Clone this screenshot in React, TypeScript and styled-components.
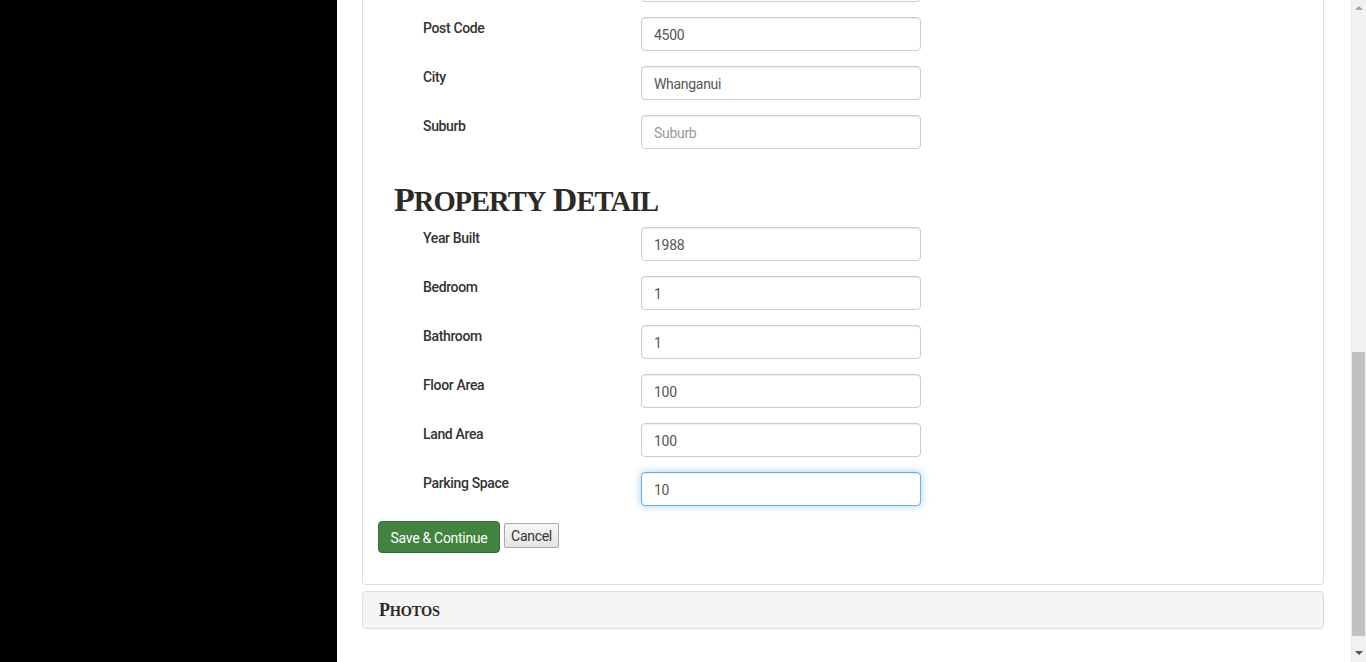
import React from "react";
import styled, { createGlobalStyle } from "styled-components";

const Global = createGlobalStyle`
  html, body { margin: 0; padding: 0; height: 662px; overflow: hidden; background: #fff; }
  body { font-family: Roboto, "Liberation Sans", sans-serif; }
  * { box-sizing: border-box; }
`;

const Shell = styled.div`
  display: flex;
  height: 662px;
  overflow: hidden;
`;

const Sidebar = styled.aside`
  width: 337px;
  flex: 0 0 337px;
  background: #000;
`;

const Main = styled.main`
  flex: 1;
  min-width: 0;
  background: #fff;
  padding: 0 27px 0 25px;
  overflow: hidden;
`;

const Panel = styled.section`
  margin-top: -60px;
  border: 1px solid #ddd;
  border-top: none;
  border-radius: 0 0 4px 4px;
  padding: 0 15px 31px 15px;
`;

const Fields = styled.div<{ $top?: number }>`
  display: flex;
  flex-direction: column;
  gap: 15px;
  padding-left: 45px;
  padding-top: ${(p) => p.$top ?? 0}px;
`;

const Row = styled.div`
  display: grid;
  grid-template-columns: 218px 280px;
  align-items: start;
  height: 34px;
`;

const Label = styled.label`
  font-size: 14px;
  font-weight: 500;
  color: #333;
  letter-spacing: -0.35px;
  padding-top: 1px;
  line-height: 20px;
`;

const Input = styled.input<{ $focus?: boolean }>`
  width: 280px;
  height: 34px;
  padding: 8px 12px 6px;
  font-family: Roboto, "Liberation Sans", sans-serif;
  font-size: 14px;
  letter-spacing: -0.3px;
  color: #555;
  background: #fff;
  border: 1px solid ${(p) => (p.$focus ? "#66afe9" : "#ccc")};
  border-radius: 4px;
  box-shadow: ${(p) =>
    p.$focus
      ? "inset 0 1px 1px rgba(0,0,0,.075), 0 0 8px rgba(102,175,233,.6)"
      : "inset 0 1px 1px rgba(0,0,0,.075)"};
  outline: none;
  &::placeholder { color: #999; }
`;

const Heading = styled.h2`
  margin: 0;
  padding: 34px 0 8px 16px;
  font-family: "Liberation Serif", "Times New Roman", serif;
  font-weight: 700;
  font-size: 34px;
  line-height: 34px;
  letter-spacing: -1px;
  color: #2d2a26;
`;

const Small = styled.span<{ $scale?: number }>`
  font-size: ${(p) => p.$scale ?? 0.84}em;
`;

const Actions = styled.div`
  display: flex;
  align-items: center;
  gap: 4px;
  margin-top: 15px;
`;

const PrimaryButton = styled.button`
  height: 32px;
  width: 122px;
  padding: 1px 0 0;
  white-space: nowrap;
  font-family: Roboto, "Liberation Sans", sans-serif;
  font-size: 14px;
  letter-spacing: -0.3px;
  color: #fff;
  background: #41833f;
  border: 1px solid #366f35;
  border-radius: 4px;
`;

const PlainButton = styled.button`
  height: 25px;
  width: 55px;
  padding: 0;
  font-family: Roboto, "Liberation Sans", sans-serif;
  font-size: 14px;
  letter-spacing: -0.3px;
  color: #333;
  background: linear-gradient(#f6f6f6, #e4e4e4);
  border: 1px solid #a9a9a9;
  border-radius: 2px;
  margin-top: -3px;
`;

const CollapsedPanel = styled.div`
  margin-top: 6px;
  height: 38px;
  display: flex;
  align-items: center;
  padding: 0 16px;
  background: #f5f5f5;
  border: 1px solid #ddd;
  border-radius: 4px;
`;

const PanelTitle = styled.h3`
  margin: 0;
  font-family: "Liberation Serif", "Times New Roman", serif;
  font-weight: 700;
  font-size: 18px;
  color: #2d2a26;
  letter-spacing: -0.2px;
`;

const Scrollbar = styled.div`
  width: 15px;
  flex: 0 0 15px;
  background: #f1f1f1;
  border-left: 1px solid #e8e8e8;
  padding: 352px 0 0 0;
  position: relative;
`;

const Thumb = styled.div`
  width: 13px;
  height: 284px;
  background: #c1c1c1;
`;

const Arrow = styled.div<{ $up?: boolean }>`
  position: absolute;
  left: 3px;
  ${(p) => (p.$up ? "top: 6px;" : "bottom: 7px;")}
  width: 0;
  height: 0;
  border-left: 4px solid transparent;
  border-right: 4px solid transparent;
  ${(p) => (p.$up ? "border-bottom: 4px solid #a3a3a3;" : "border-top: 4px solid #505050;")}
`;

const address = [
  { label: "", value: "" },
  { label: "Post Code", value: "4500" },
  { label: "City", value: "Whanganui" },
  { label: "Suburb", value: "", placeholder: "Suburb" },
];

const property = [
  { label: "Year Built", value: "1988" },
  { label: "Bedroom", value: "1" },
  { label: "Bathroom", value: "1" },
  { label: "Floor Area", value: "100" },
  { label: "Land Area", value: "100" },
  { label: "Parking Space", value: "10", focus: true },
];

export default function App() {
  return (
    <>
      <Global />
      <Shell>
        <Sidebar />
        <Main>
          <Panel>
            <Fields $top={28}>
              {address.map((f, i) => (
                <Row key={i}>
                  <Label>{f.label}</Label>
                  <Input defaultValue={f.value} placeholder={f.placeholder} />
                </Row>
              ))}
            </Fields>
            <Heading>
              P<Small>ROPERTY</Small> D<Small>ETAIL</Small>
            </Heading>
            <Fields>
              {property.map((f) => (
                <Row key={f.label}>
                  <Label>{f.label}</Label>
                  <Input defaultValue={f.value} $focus={f.focus} />
                </Row>
              ))}
            </Fields>
            <Actions>
              <PrimaryButton>Save &amp; Continue</PrimaryButton>
              <PlainButton>Cancel</PlainButton>
            </Actions>
          </Panel>
          <CollapsedPanel>
            <PanelTitle>
              P<Small $scale={0.8}>HOTOS</Small>
            </PanelTitle>
          </CollapsedPanel>
        </Main>
        <Scrollbar>
          <Arrow $up />
          <Thumb />
          <Arrow />
        </Scrollbar>
      </Shell>
    </>
  );
}
